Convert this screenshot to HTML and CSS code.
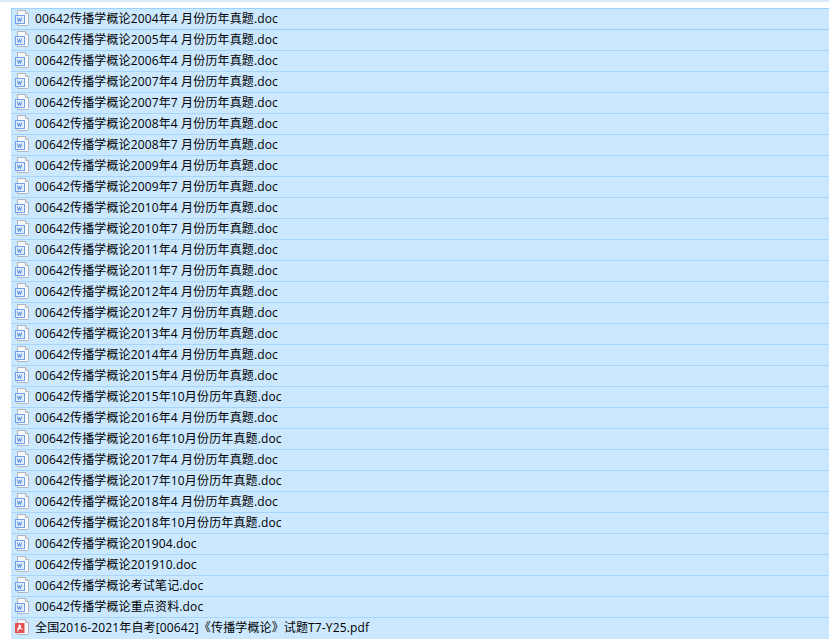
FILE: index.html
```html
<!DOCTYPE html>
<html lang="zh">
<head>
<meta charset="utf-8">
<title>文件列表</title>
<link rel="stylesheet" href="styles.css">
</head>
<body>
<svg class="defs" width="0" height="0" aria-hidden="true">
<symbol id="doc" viewBox="0 0 16 16">
<path d="M3.500.5h8l3 3v11a1 1 0 0 1-1 1h-10z" fill="#f8f9fb" stroke="#aeb5c0"/>
<path d="M11.500.5v3h3" fill="#e8ebf0" stroke="#aeb5c0"/>
<rect x="1.500" y="5.500" width="9" height="8" fill="#e3effd" stroke="#6e9fe8"/>
<path d="M3.500 7.500l.9 4 1.100-3 1.100 3 .9-4" fill="none" stroke="#3f7fdd" stroke-width=".9"/>
</symbol>
<symbol id="pdf" viewBox="0 0 16 16">
<path d="M3.500.5h8l3 3v11a1 1 0 0 1-1 1h-10z" fill="#f8f9fb" stroke="#aeb5c0"/>
<path d="M11.500.5v3h3" fill="#e8ebf0" stroke="#aeb5c0"/>
<rect x="1" y="4" width="9.500" height="10" rx=".5" fill="#e2504f"/>
<path d="M3.500 12.500c1.200-1.500 1.500-3.500 1.500-5.500 0-1.200 1.500-1 1.500.2 0 1.500-1.500 2.300-3.300 2.600M5.500 9.300c1 .7 1.800.8 3 .7" fill="none" stroke="#fff" stroke-width="1.200"/>
</symbol>
</svg>
<div class="topbar"></div>
<ul class="list">
<li class="row"><svg class="icon"><use href="#doc"/></svg><span>00642传播学概论2004年4 月份历年真题.doc</span></li>
<li class="row"><svg class="icon"><use href="#doc"/></svg><span>00642传播学概论2005年4 月份历年真题.doc</span></li>
<li class="row"><svg class="icon"><use href="#doc"/></svg><span>00642传播学概论2006年4 月份历年真题.doc</span></li>
<li class="row"><svg class="icon"><use href="#doc"/></svg><span>00642传播学概论2007年4 月份历年真题.doc</span></li>
<li class="row"><svg class="icon"><use href="#doc"/></svg><span>00642传播学概论2007年7 月份历年真题.doc</span></li>
<li class="row"><svg class="icon"><use href="#doc"/></svg><span>00642传播学概论2008年4 月份历年真题.doc</span></li>
<li class="row"><svg class="icon"><use href="#doc"/></svg><span>00642传播学概论2008年7 月份历年真题.doc</span></li>
<li class="row"><svg class="icon"><use href="#doc"/></svg><span>00642传播学概论2009年4 月份历年真题.doc</span></li>
<li class="row"><svg class="icon"><use href="#doc"/></svg><span>00642传播学概论2009年7 月份历年真题.doc</span></li>
<li class="row"><svg class="icon"><use href="#doc"/></svg><span>00642传播学概论2010年4 月份历年真题.doc</span></li>
<li class="row"><svg class="icon"><use href="#doc"/></svg><span>00642传播学概论2010年7 月份历年真题.doc</span></li>
<li class="row"><svg class="icon"><use href="#doc"/></svg><span>00642传播学概论2011年4 月份历年真题.doc</span></li>
<li class="row"><svg class="icon"><use href="#doc"/></svg><span>00642传播学概论2011年7 月份历年真题.doc</span></li>
<li class="row"><svg class="icon"><use href="#doc"/></svg><span>00642传播学概论2012年4 月份历年真题.doc</span></li>
<li class="row"><svg class="icon"><use href="#doc"/></svg><span>00642传播学概论2012年7 月份历年真题.doc</span></li>
<li class="row"><svg class="icon"><use href="#doc"/></svg><span>00642传播学概论2013年4 月份历年真题.doc</span></li>
<li class="row"><svg class="icon"><use href="#doc"/></svg><span>00642传播学概论2014年4 月份历年真题.doc</span></li>
<li class="row"><svg class="icon"><use href="#doc"/></svg><span>00642传播学概论2015年4 月份历年真题.doc</span></li>
<li class="row"><svg class="icon"><use href="#doc"/></svg><span>00642传播学概论2015年10月份历年真题.doc</span></li>
<li class="row"><svg class="icon"><use href="#doc"/></svg><span>00642传播学概论2016年4 月份历年真题.doc</span></li>
<li class="row"><svg class="icon"><use href="#doc"/></svg><span>00642传播学概论2016年10月份历年真题.doc</span></li>
<li class="row"><svg class="icon"><use href="#doc"/></svg><span>00642传播学概论2017年4 月份历年真题.doc</span></li>
<li class="row"><svg class="icon"><use href="#doc"/></svg><span>00642传播学概论2017年10月份历年真题.doc</span></li>
<li class="row"><svg class="icon"><use href="#doc"/></svg><span>00642传播学概论2018年4 月份历年真题.doc</span></li>
<li class="row"><svg class="icon"><use href="#doc"/></svg><span>00642传播学概论2018年10月份历年真题.doc</span></li>
<li class="row"><svg class="icon"><use href="#doc"/></svg><span>00642传播学概论201904.doc</span></li>
<li class="row"><svg class="icon"><use href="#doc"/></svg><span>00642传播学概论201910.doc</span></li>
<li class="row"><svg class="icon"><use href="#doc"/></svg><span>00642传播学概论考试笔记.doc</span></li>
<li class="row"><svg class="icon"><use href="#doc"/></svg><span>00642传播学概论重点资料.doc</span></li>
<li class="row"><svg class="icon"><use href="#pdf"/></svg><span>全国2016-2021年自考[00642]《传播学概论》试题T7-Y25.pdf</span></li>
</ul>
</body>
</html>
```
FILE: styles.css
```css
html, body {
  margin: 0;
  padding: 0;
  background: #fff;
  overflow: hidden;
}
.defs {
  display: block;
  height: 0;
}
.topbar {
  height: 2px;
  margin-bottom: 6px;
  background: #d9ebfb;
}
.list {
  list-style: none;
  margin: 0 0 0 11px;
  padding: 0;
  border-top: 1px solid #99d1ff;
}
.row {
  display: flex;
  align-items: center;
  gap: 5px;
  box-sizing: border-box;
  height: 21px;
  padding: 0 0 1px 3px;
  background: #cce8ff;
  border-bottom: 1px solid #a5d6fd;
  font: 12px/18px "Open Sans", "Noto Sans CJK SC", sans-serif;
  letter-spacing: 0.14px;
  color: #000;
  white-space: nowrap;
}
.row:first-child {
  border-bottom-color: #99d1ff;
  box-shadow: inset 1px 0 #99d1ff;
}
.row:last-child {
  border-bottom: 0;
}
.icon {
  flex: none;
  width: 16px;
  height: 16px;
  margin-bottom: 2px;
}
```
